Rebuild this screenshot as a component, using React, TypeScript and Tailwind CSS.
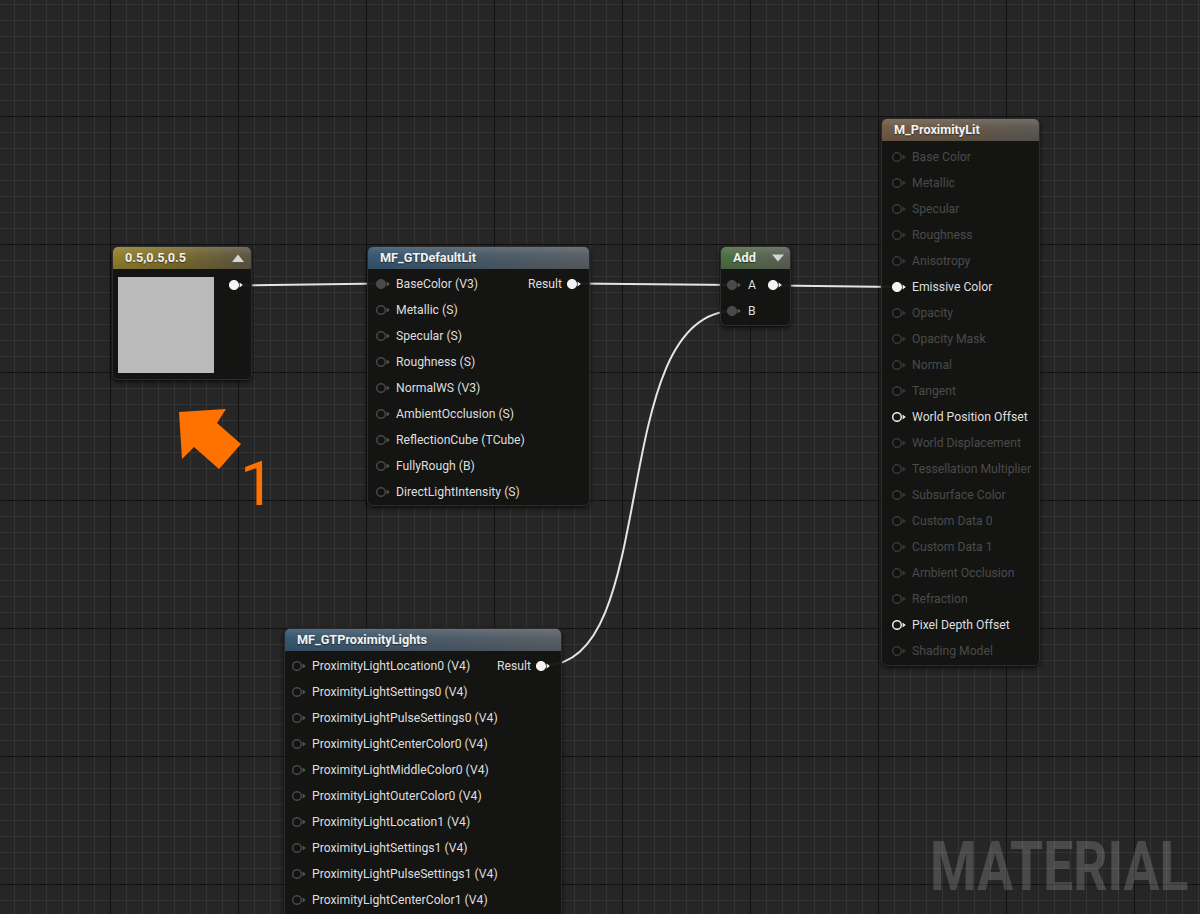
import React from "react";

type PinKind = "dim" | "open" | "linked" | "on" | "ring";

const pinColors: Record<PinKind, { ring: string; fill: string; arrow: string }> = {
  dim: { ring: "#393939", fill: "#111111", arrow: "#393939" },
  open: { ring: "#474747", fill: "#131313", arrow: "#575757" },
  linked: { ring: "#4a4a4a", fill: "#4a4a4a", arrow: "#5c5c5c" },
  on: { ring: "#f4f4f4", fill: "#f4f4f4", arrow: "#f4f4f4" },
  ring: { ring: "#ececec", fill: "#151515", arrow: "#ececec" },
};

function Pin({ kind }: { kind: PinKind }) {
  const c = pinColors[kind];
  return (
    <svg width="14" height="10" viewBox="0 0 14 10" className="shrink-0">
      <circle cx="5" cy="5" r="4.3" fill={c.fill} stroke={c.ring} strokeWidth="1.5" />
      <path d="M10.6 2.6 L13.8 5 L10.6 7.4 Z" fill={c.arrow} />
    </svg>
  );
}

function InRow({ label, kind, dim }: { label: string; kind: PinKind; dim?: boolean }) {
  return (
    <div className="flex h-[26px] items-center gap-[6px]">
      <Pin kind={kind} />
      <span className={dim ? "text-[#4a4a4a]" : "text-[#dedede]"}>{label}</span>
    </div>
  );
}

function ResultPin({ pr }: { pr: string }) {
  return (
    <div className={`flex items-center gap-[5px] ${pr}`}>
      <span className="text-[#dedede]">Result</span>
      <Pin kind="on" />
    </div>
  );
}

function Node({
  className,
  header,
  title,
  right,
  children,
}: {
  className: string;
  header: string;
  title: string;
  right?: React.ReactNode;
  children: React.ReactNode;
}) {
  return (
    <div
      className={`absolute overflow-hidden rounded-[6px] border border-[#2c2d2b] bg-[#131412]/95 shadow-[0_2px_5px_rgba(0,0,0,0.7)] ${className}`}
    >
      <div className={`flex h-[22px] items-center justify-between pl-[12px] pr-[6px] ${header}`}>
        <span className="text-[12.7px] font-bold text-[#f2f2f2] [text-shadow:0_1px_1px_rgba(0,0,0,0.5)]">
          {title}
        </span>
        {right}
      </div>
      {children}
    </div>
  );
}

const gold =
  "bg-[linear-gradient(180deg,rgba(255,255,255,0.12),rgba(255,255,255,0)_40%,rgba(0,0,0,0.12)),linear-gradient(90deg,#93812e,#7d6d2e_45%,#5b5546)]";
const blue =
  "bg-[linear-gradient(180deg,rgba(255,255,255,0.12),rgba(255,255,255,0)_40%,rgba(0,0,0,0.12)),linear-gradient(90deg,#375771,#4a5b69_50%,#5a6066)]";
const green =
  "bg-[linear-gradient(180deg,rgba(255,255,255,0.12),rgba(255,255,255,0)_40%,rgba(0,0,0,0.12)),linear-gradient(90deg,#4b7141,#59684f_55%,#5c6058)]";
const brown =
  "bg-[linear-gradient(180deg,rgba(255,255,255,0.12),rgba(255,255,255,0)_40%,rgba(0,0,0,0.12)),linear-gradient(90deg,#715c45,#67594a_50%,#5d5954)]";

const defaultLitInputs = [
  "Metallic (S)",
  "Specular (S)",
  "Roughness (S)",
  "NormalWS (V3)",
  "AmbientOcclusion (S)",
  "ReflectionCube (TCube)",
  "FullyRough (B)",
  "DirectLightIntensity (S)",
];

const proximityInputs = [
  "ProximityLightSettings0 (V4)",
  "ProximityLightPulseSettings0 (V4)",
  "ProximityLightCenterColor0 (V4)",
  "ProximityLightMiddleColor0 (V4)",
  "ProximityLightOuterColor0 (V4)",
  "ProximityLightLocation1 (V4)",
  "ProximityLightSettings1 (V4)",
  "ProximityLightPulseSettings1 (V4)",
  "ProximityLightCenterColor1 (V4)",
];

const materialInputs: { label: string; kind: PinKind }[] = [
  { label: "Base Color", kind: "dim" },
  { label: "Metallic", kind: "dim" },
  { label: "Specular", kind: "dim" },
  { label: "Roughness", kind: "dim" },
  { label: "Anisotropy", kind: "dim" },
  { label: "Emissive Color", kind: "on" },
  { label: "Opacity", kind: "dim" },
  { label: "Opacity Mask", kind: "dim" },
  { label: "Normal", kind: "dim" },
  { label: "Tangent", kind: "dim" },
  { label: "World Position Offset", kind: "ring" },
  { label: "World Displacement", kind: "dim" },
  { label: "Tessellation Multiplier", kind: "dim" },
  { label: "Subsurface Color", kind: "dim" },
  { label: "Custom Data 0", kind: "dim" },
  { label: "Custom Data 1", kind: "dim" },
  { label: "Ambient Occlusion", kind: "dim" },
  { label: "Refraction", kind: "dim" },
  { label: "Pixel Depth Offset", kind: "ring" },
  { label: "Shading Model", kind: "dim" },
];

function GridAndWires() {
  return (
    <svg className="absolute inset-0" width="1200" height="914" viewBox="0 0 1200 914">
      <defs>
        <pattern id="minor" x="14" y="4" width="16" height="16" patternUnits="userSpaceOnUse">
          <rect x="0" y="0" width="16" height="1" fill="#343434" />
          <rect x="0" y="0" width="1" height="16" fill="#343434" />
        </pattern>
        <pattern id="major" x="110" y="116" width="128" height="128" patternUnits="userSpaceOnUse">
          <rect x="0" y="0" width="128" height="1" fill="#121212" />
          <rect x="0" y="0" width="1" height="128" fill="#121212" />
        </pattern>
      </defs>
      <rect width="1200" height="914" fill="#262626" />
      <rect width="1200" height="914" fill="url(#minor)" />
      <rect width="1200" height="914" fill="url(#major)" />
      <g stroke="#e4e4e4" strokeWidth="2" fill="none" strokeLinecap="round">
        <path d="M238 285.5 L382 283.5" />
        <path d="M576 283.5 L734 285" />
        <path d="M776 285.5 L896 287" />
        <path d="M546 665 C662 665 606 311 734 311" />
      </g>
    </svg>
  );
}

export default function App() {
  return (
    <div className="relative h-[914px] w-[1200px] overflow-hidden bg-[#262626] font-[Roboto,'Liberation_Sans',sans-serif] text-[12.2px]">
      <GridAndWires />

      {/* constant vector */}
      <Node
        className="left-[112px] top-[246px] h-[134px] w-[140px]"
        header={gold}
        title="0.5,0.5,0.5"
        right={
          <svg width="12" height="8" viewBox="0 0 12 8" className="mr-[1px]">
            <path d="M0 8 L6 0.5 L12 8 Z" fill="#d6d6d6" />
          </svg>
        }
      >
        <div className="flex items-start pl-[5px] pt-[8px]">
          <div className="h-[96px] w-[96px] bg-[#bababa]" />
          <div className="ml-[15px] mt-[3px]">
            <Pin kind="on" />
          </div>
        </div>
      </Node>

      {/* MF_GTDefaultLit */}
      <Node className="left-[367px] top-[246px] h-[260px] w-[223px]" header={blue} title="MF_GTDefaultLit">
        <div className="pl-[8px] pt-[2px]">
          <div className="flex h-[26px] items-center justify-between">
            <div className="flex items-center gap-[6px]">
              <Pin kind="linked" />
              <span className="text-[#dedede]">BaseColor (V3)</span>
            </div>
            <ResultPin pr="pr-[8px]" />
          </div>
          {defaultLitInputs.map((l) => (
            <InRow key={l} label={l} kind="open" />
          ))}
        </div>
      </Node>

      {/* Add */}
      <Node
        className="left-[720px] top-[246px] h-[80px] w-[71px]"
        header={green}
        title="Add"
        right={
          <svg width="12" height="8" viewBox="0 0 12 8">
            <path d="M0 0.5 L12 0.5 L6 7.5 Z" fill="#d6d6d6" />
          </svg>
        }
      >
        <div className="pl-[6px] pt-[3px]">
          <div className="flex h-[26px] items-center justify-between pr-[8px]">
            <div className="flex items-center gap-[7px]">
              <Pin kind="linked" />
              <span className="text-[#dedede]">A</span>
            </div>
            <Pin kind="on" />
          </div>
          <div className="flex h-[26px] items-center gap-[7px]">
            <Pin kind="linked" />
            <span className="text-[#dedede]">B</span>
          </div>
        </div>
      </Node>

      {/* M_ProximityLit */}
      <Node className="left-[881px] top-[118px] h-[548px] w-[159px]" header={brown} title="M_ProximityLit">
        <div className="pl-[10px] pt-[3px]">
          {materialInputs.map((r) => (
            <InRow key={r.label} label={r.label} kind={r.kind} dim={r.kind === "dim"} />
          ))}
        </div>
      </Node>

      {/* MF_GTProximityLights */}
      <Node className="left-[284px] top-[628px] h-[300px] w-[278px]" header={blue} title="MF_GTProximityLights">
        <div className="pl-[7px] pt-[2px]">
          <div className="flex h-[26px] items-center justify-between">
            <div className="flex items-center gap-[6px]">
              <Pin kind="open" />
              <span className="text-[#dedede]">ProximityLightLocation0 (V4)</span>
            </div>
            <ResultPin pr="pr-[11px]" />
          </div>
          {proximityInputs.map((l) => (
            <InRow key={l} label={l} kind="open" />
          ))}
        </div>
      </Node>

      {/* annotation */}
      <svg className="absolute left-0 top-0" width="300" height="520" viewBox="0 0 300 520">
        <polygon points="179,412 226,409 217,423 241,444 219,469 194,447 182,459" fill="#ff7200" />
      </svg>
      <div className="absolute left-[240px] top-[453px] text-[62px] leading-none text-[#ff7200]">1</div>

      <div className="absolute left-[930px] top-[832px] origin-left scale-x-[0.775] text-[69px] font-bold leading-none text-white/[0.17]">
        MATERIAL
      </div>
    </div>
  );
}
